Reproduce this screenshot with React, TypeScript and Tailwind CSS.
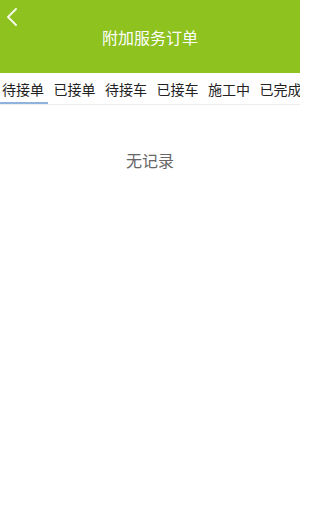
import React from "react";

const tabs = ["待接单", "已接单", "待接车", "已接车", "施工中", "已完成"];

export default function App() {
  return (
    <div
      className="w-[300px] h-[522px] bg-white overflow-hidden"
      style={{ fontFamily: '"Noto Sans CJK SC", "Noto Sans", sans-serif' }}
    >
      <div className="relative h-[73px] bg-[#8dc21f] flex items-center justify-center">
        <svg
          className="absolute left-[5px] top-[7px]"
          width="14"
          height="20"
          viewBox="0 0 14 20"
          fill="none"
        >
          <path d="M11 2 L3 10 L11 18" stroke="#f4f8e8" strokeWidth="2" strokeLinecap="round" strokeLinejoin="round" />
        </svg>
        <span className="text-white text-[16px] leading-none">附加服务订单</span>
      </div>
      <div className="flex h-[32px] border-b border-[#ececec] overflow-hidden whitespace-nowrap">
        {tabs.map((t, i) => (
          <div key={t} className="relative shrink-0 w-[51.5px] pl-[2px] flex items-center">
            <span className="text-[14px] leading-none text-[#222]">{t}</span>
            {i === 0 && (
              <div className="absolute left-0 bottom-0 w-[48px] h-[2px] bg-[#8fb3dc]" />
            )}
          </div>
        ))}
      </div>
      <div className="flex justify-center pt-[47px]">
        <span className="text-[16px] leading-none text-[#666]">无记录</span>
      </div>
    </div>
  );
}
